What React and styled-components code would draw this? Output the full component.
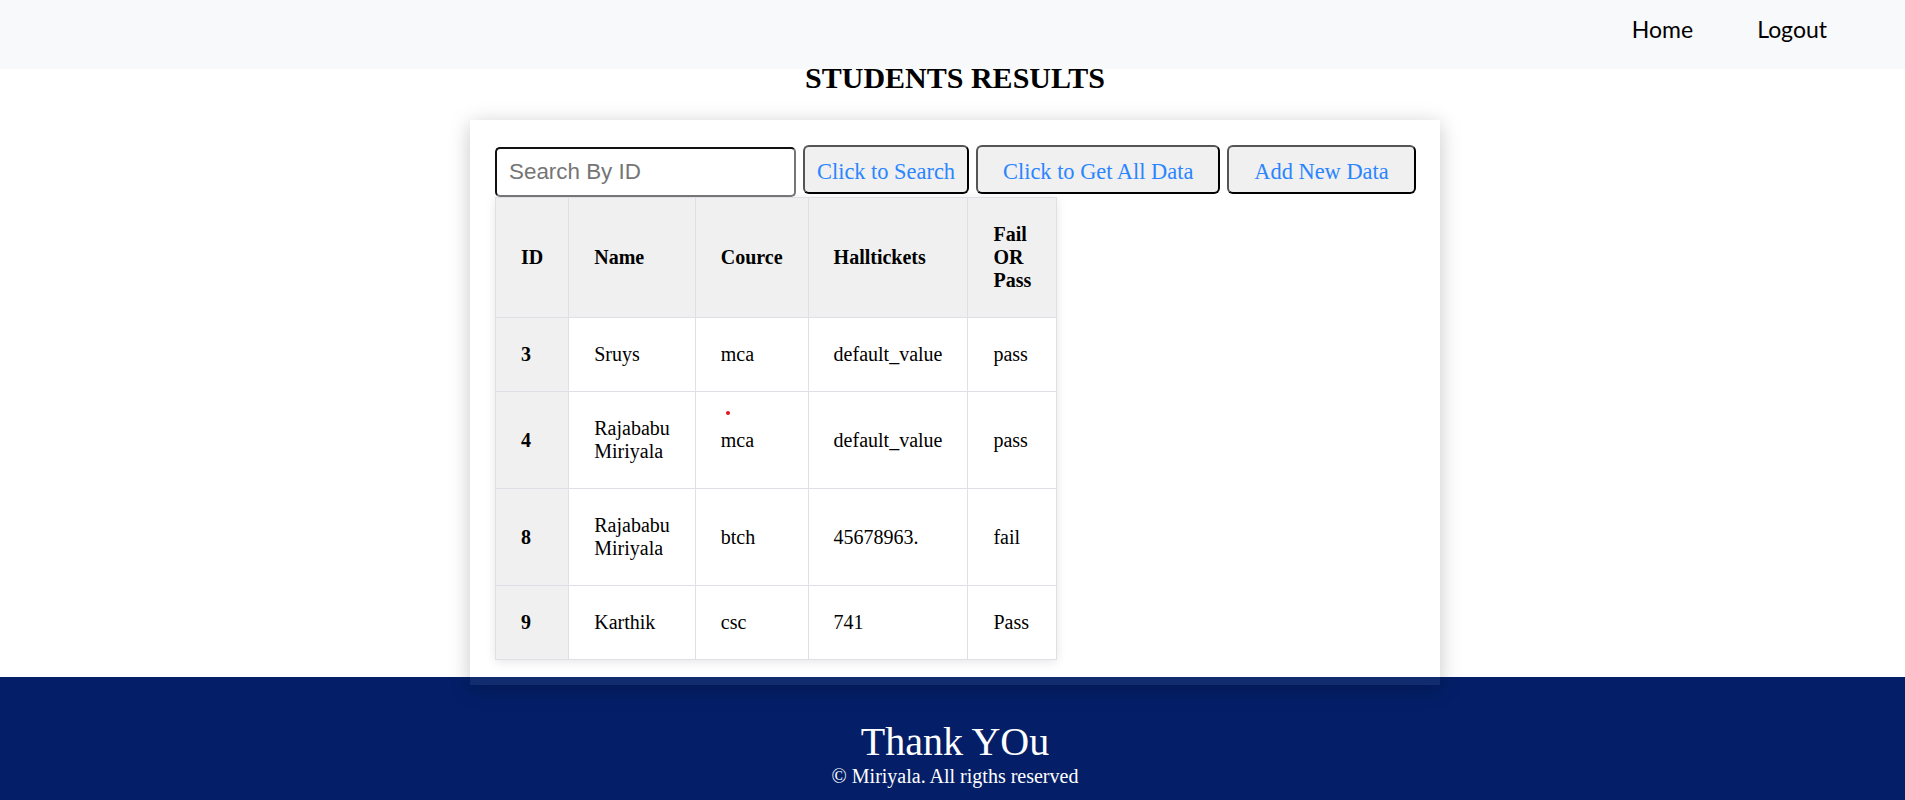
import React from "react";
import styled, { createGlobalStyle } from "styled-components";

const GlobalStyle = createGlobalStyle`
  html, body { margin: 0; padding: 0; background: #ffffff; }
  body { font-family: "Liberation Serif", "Times New Roman", serif; color: #000; }
  * { box-sizing: border-box; }
`;

const Page = styled.div`
  display: flex;
  flex-direction: column;
  min-height: 800px;
`;

const Header = styled.header`
  height: 69px;
  background: #f8f9fa;
  display: flex;
  justify-content: flex-end;
  align-items: flex-start;
  padding: 15px 78px 0 0;
`;

const Nav = styled.nav`
  display: flex;
  gap: 64px;
`;

const NavLink = styled.a`
  font-family: "Lato", "Noto Sans", sans-serif;
  font-size: 23px;
  color: #000;
  text-decoration: none;
  cursor: pointer;
`;

const Main = styled.main`
  display: flex;
  flex-direction: column;
  align-items: center;
  padding-left: 5px;
`;

const Title = styled.h1`
  margin: -8px 0 25px;
  font-size: 30px;
  font-weight: bold;
  text-align: center;
`;

const Card = styled.section`
  position: relative;
  z-index: 1;
  width: 970px;
  padding: 25px;
  margin-bottom: -8px;
  background: rgba(255, 255, 255, 0.06);
  box-shadow: 0 4px 20px rgba(0, 0, 0, 0.22);
`;

const Toolbar = styled.div`
  display: flex;
  align-items: flex-start;
  gap: 7px;
`;

const SearchInput = styled.input`
  width: 301px;
  height: 50px;
  margin-top: 2px;
  padding: 0 12px;
  border: 2px solid;
  border-color: #111 #767676 #767676 #111;
  border-radius: 5px;
  background: #fff;
  font-family: "Liberation Sans", Arial, sans-serif;
  font-size: 22.4px;
  outline: none;
  &::placeholder { color: #757575; }
`;

const ActionButton = styled.button`
  height: 49px;
  padding: 4px ${(p) => (p.$compact ? "12px" : "25px")} 0;
  border: 2px solid;
  border-color: #555 #000 #000 #555;
  border-radius: 6px;
  background: #f0f0f0;
  color: #2a85ff;
  font-family: "Liberation Serif", "Times New Roman", serif;
  font-size: 22.4px;
  white-space: nowrap;
  cursor: pointer;
`;

const Table = styled.table`
  width: min-content;
  border-collapse: collapse;
  font-size: 20px;
  box-shadow: 0 2px 10px rgba(0, 0, 0, 0.1);
`;

const HeadCell = styled.th`
  padding: 25px;
  border: 1px solid #dfe0e5;
  background: #f0f0f0;
  font-weight: bold;
  text-align: left;
  vertical-align: middle;
`;

const Cell = styled.td`
  position: relative;
  padding: 25px;
  border: 1px solid #dfe0e5;
  background: #fff;
  text-align: left;
  vertical-align: middle;
`;

const Marker = styled.span`
  position: absolute;
  left: 30px;
  top: 19px;
  width: 4px;
  height: 4px;
  border-radius: 50%;
  background: #e0141e;
`;

const Footer = styled.footer`
  margin-top: auto;
  background: #041f68;
  color: #fff;
  text-align: center;
  padding: 41px 0 36px 5px;
`;

const Thanks = styled.div`
  font-size: 40px;
`;

const Copy = styled.div`
  font-size: 20px;
`;

const rows = [
  { id: 3, name: "Sruys", cource: "mca", hall: "default_value", result: "pass" },
  { id: 4, name: "Rajababu Miriyala", cource: "mca", hall: "default_value", result: "pass", marker: true },
  { id: 8, name: "Rajababu Miriyala", cource: "btch", hall: "45678963.", result: "fail" },
  { id: 9, name: "Karthik", cource: "csc", hall: "741", result: "Pass" },
];

export default function App() {
  return (
    <>
      <GlobalStyle />
      <Page>
        <Header>
          <Nav>
            <NavLink>Home</NavLink>
            <NavLink>Logout</NavLink>
          </Nav>
        </Header>
        <Main>
          <Title>STUDENTS RESULTS</Title>
          <Card>
            <Toolbar>
              <SearchInput placeholder="Search By ID" />
              <ActionButton $compact>Click to Search</ActionButton>
              <ActionButton>Click to Get All Data</ActionButton>
              <ActionButton>Add New Data</ActionButton>
            </Toolbar>
            <Table>
              <thead>
                <tr>
                  <HeadCell>ID</HeadCell>
                  <HeadCell>Name</HeadCell>
                  <HeadCell>Cource</HeadCell>
                  <HeadCell>Halltickets</HeadCell>
                  <HeadCell>Fail OR Pass</HeadCell>
                </tr>
              </thead>
              <tbody>
                {rows.map((r) => (
                  <tr key={r.id}>
                    <HeadCell>{r.id}</HeadCell>
                    <Cell>{r.name}</Cell>
                    <Cell>
                      {r.marker && <Marker />}
                      {r.cource}
                    </Cell>
                    <Cell>{r.hall}</Cell>
                    <Cell>{r.result}</Cell>
                  </tr>
                ))}
              </tbody>
            </Table>
          </Card>
        </Main>
        <Footer>
          <Thanks>Thank YOu</Thanks>
          <Copy>© Miriyala. All rigths reserved</Copy>
        </Footer>
      </Page>
    </>
  );
}
